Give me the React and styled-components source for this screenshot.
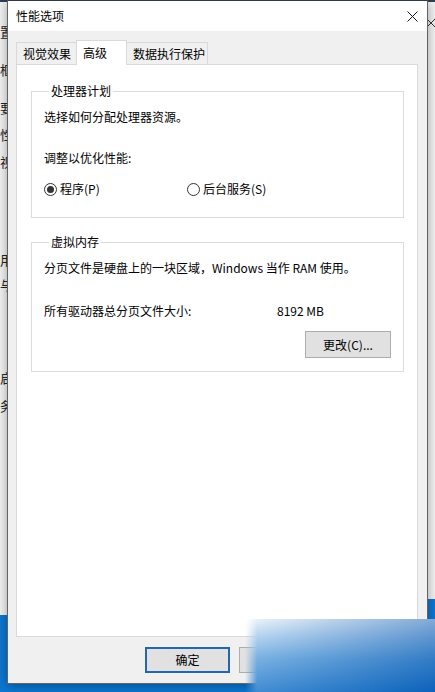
import React from "react";
import styled, { createGlobalStyle } from "styled-components";

const GlobalStyle = createGlobalStyle`
  html, body {
    margin: 0;
    padding: 0;
  }
  body {
    width: 435px;
    height: 692px;
    overflow: hidden;
    background: #0d77d3;
    font-family: "Noto Sans CJK SC", "Microsoft YaHei", sans-serif;
    font-size: 12px;
    color: #000;
  }
`;

const Desktop = styled.div`
  position: relative;
  width: 435px;
  height: 692px;
  overflow: hidden;
  background: #0d77d3;
`;

// windows lying behind the dialog, only their edges show
const BackWindow = styled.div`
  position: absolute;
  top: 0;
  left: ${(p) => p.$left}px;
  width: 300px;
  height: ${(p) => p.$height}px;
  background: #f2f2f2;
  border-top: 2px solid #2c3e50;
  overflow: hidden;
  display: flex;
  flex-direction: column;
  align-items: ${(p) => (p.$side === "left" ? "flex-end" : "flex-start")};
`;

const Fragment = styled.span`
  display: block;
  width: 8px;
  line-height: 16px;
  margin-top: ${(p) => p.$gap}px;
  font-size: 13px;
  white-space: nowrap;
  overflow: visible;
  color: #222;
`;

const BackClose = styled.svg`
  margin-top: 16px;
  margin-left: -2px;
`;

const Dialog = styled.div`
  position: absolute;
  left: 7px;
  top: 0;
  width: 421px;
  height: 684px;
  box-sizing: border-box;
  border: 1px solid #5f6468;
  border-top-color: #2e3a44;
  background: #f0f0f0;
  box-shadow: 0 2px 10px rgba(0, 0, 0, 0.35);
  display: flex;
  flex-direction: column;
`;

const TitleBar = styled.div`
  height: 30px;
  flex-shrink: 0;
  background: #fff;
  display: flex;
  align-items: center;
  justify-content: space-between;
  padding-left: 8px;
`;

const Title = styled.span`
  font-size: 12px;
  line-height: 16px;
`;

const CloseButton = styled.div`
  width: 30px;
  height: 30px;
  display: flex;
  align-items: center;
  justify-content: center;
`;

const Body = styled.div`
  flex: 1;
  display: flex;
  flex-direction: column;
  padding: 9px 9px 10px 8px;
  min-height: 0;
`;

const TabRow = styled.div`
  display: flex;
  align-items: flex-end;
  height: 25px;
  margin-bottom: -1px;
  position: relative;
  z-index: 1;
`;

const Tab = styled.div`
  box-sizing: border-box;
  width: ${(p) => p.$w}px;
  height: ${(p) => (p.$active ? 25 : 22)}px;
  margin-bottom: ${(p) => (p.$active ? 0 : 1)}px;
  margin-left: ${(p) => (p.$first ? 0 : -1)}px;
  padding-left: 6px;
  border: 1px solid #d9d9d9;
  border-bottom: none;
  background: ${(p) => (p.$active ? "#fff" : "#f0f0f0")};
  position: relative;
  z-index: ${(p) => (p.$active ? 2 : 1)};
  display: flex;
  align-items: center;
  font-size: 12px;
  line-height: 16px;
  padding-top: ${(p) => (p.$active ? 0 : 1)}px;
`;

const Panel = styled.div`
  flex: 1;
  background: #fff;
  border: 1px solid #d9d9d9;
  padding: 18px 13px 0 14px;
  display: flex;
  flex-direction: column;
  gap: 16px;
`;

const Group = styled.fieldset`
  margin: 0;
  border: 1px solid #dcdcdc;
  padding: 0 12px ${(p) => p.$pb}px 12px;
  display: flex;
  flex-direction: column;
  min-width: 0;
`;

const Legend = styled.legend`
  padding: 0 2px;
  margin-left: 5px;
  font-size: 12px;
  line-height: 16px;
`;

const Line = styled.div`
  margin-top: ${(p) => p.$mt}px;
  line-height: 16px;
  font-size: 12px;
  white-space: nowrap;
`;

const RadioRow = styled.div`
  margin-top: 15px;
  display: grid;
  grid-template-columns: 143px auto;
  height: 16px;
  align-items: center;
`;

const RadioOption = styled.label`
  display: flex;
  align-items: center;
  gap: 3px;
  line-height: 16px;
  font-size: 12px;
`;

const RadioCircle = styled.span`
  box-sizing: border-box;
  width: 13px;
  height: 13px;
  border-radius: 50%;
  border: 1px solid #333;
  background: #fff;
  display: flex;
  align-items: center;
  justify-content: center;
  &::after {
    content: "";
    width: 7px;
    height: 7px;
    border-radius: 50%;
    background: ${(p) => (p.$checked ? "#333" : "transparent")};
  }
`;

const SizeRow = styled.div`
  margin-top: 27px;
  display: grid;
  grid-template-columns: 233px auto;
  line-height: 16px;
  font-size: 12px;
`;

const Button = styled.button`
  box-sizing: border-box;
  width: ${(p) => p.$w}px;
  height: ${(p) => p.$h}px;
  background: #e1e1e1;
  border: ${(p) => (p.$default ? "2px solid #2466b2" : "1px solid #adadad")};
  border-radius: 0;
  font-family: inherit;
  font-size: 12px;
  color: #000;
  padding: 0;
  line-height: 16px;
`;

const ChangeButton = styled(Button)`
  margin-top: 12px;
  align-self: flex-end;
`;

const ButtonRow = styled.div`
  margin-top: 10px;
  display: flex;
  justify-content: flex-end;
  gap: 9px;
`;

// blurred blue smear lying over the lower right corner of the shot
const Smear = styled.div`
  position: absolute;
  left: 245px;
  top: 619px;
  width: 190px;
  height: 73px;
  background:
    linear-gradient(to right, rgba(255, 255, 255, 0.2), rgba(0, 80, 170, 0.45)),
    linear-gradient(to bottom, #edf4fb 0%, #a6cbed 25%, #5ba0dc 55%, #1572c8 100%);
  -webkit-mask-image: linear-gradient(to right, transparent 0, #000 12px);
  mask-image: linear-gradient(to right, transparent 0, #000 12px);
`;

const leftFragments = [
  { ch: "置", gap: 22 },
  { ch: "框", gap: 22 },
  { ch: "要", gap: 22 },
  { ch: "性", gap: 11 },
  { ch: "视", gap: 11 },
  { ch: "用", gap: 82 },
  { ch: "与", gap: 9 },
  { ch: "启", gap: 77 },
  { ch: "务", gap: 12 },
];

export default function App() {
  return (
    <>
      <GlobalStyle />
      <Desktop>
        <BackWindow $left={-292} $height={613} $side="left">
          {leftFragments.map((f, i) => (
            <Fragment key={i} $gap={f.gap}>
              {f.ch}
            </Fragment>
          ))}
        </BackWindow>
        <BackWindow $left={428} $height={597} $side="right">
          <BackClose width="10" height="10" viewBox="0 0 10 10">
            <path d="M0 0 L10 10 M10 0 L0 10" stroke="#333" strokeWidth="1" fill="none" />
          </BackClose>
        </BackWindow>

        <Dialog>
          <TitleBar>
            <Title>性能选项</Title>
            <CloseButton>
              <svg width="11" height="11" viewBox="0 0 11 11">
                <path d="M0.5 0.5 L10.5 10.5 M10.5 0.5 L0.5 10.5" stroke="#111" strokeWidth="1" fill="none" />
              </svg>
            </CloseButton>
          </TitleBar>

          <Body>
            <TabRow>
              <Tab $w={61} $first>视觉效果</Tab>
              <Tab $w={51} $active>高级</Tab>
              <Tab $w={82}>数据执行保护</Tab>
            </TabRow>

            <Panel>
              <Group $pb={20}>
                <Legend>处理器计划</Legend>
                <Line $mt={10}>选择如何分配处理器资源。</Line>
                <Line $mt={25}>调整以优化性能:</Line>
                <RadioRow>
                  <RadioOption>
                    <RadioCircle $checked />
                    程序(P)
                  </RadioOption>
                  <RadioOption>
                    <RadioCircle />
                    后台服务(S)
                  </RadioOption>
                </RadioRow>
              </Group>

              <Group $pb={13}>
                <Legend>虚拟内存</Legend>
                <Line $mt={10}>分页文件是硬盘上的一块区域，Windows 当作 RAM 使用。</Line>
                <SizeRow>
                  <span>所有驱动器总分页文件大小:</span>
                  <span>8192 MB</span>
                </SizeRow>
                <ChangeButton $w={86} $h={27}>更改(C)...</ChangeButton>
              </Group>
            </Panel>

            <ButtonRow>
              <Button $w={85} $h={26} $default>确定</Button>
              <Button $w={85} $h={26}>取消</Button>
              <Button $w={85} $h={26}>应用(A)</Button>
            </ButtonRow>
          </Body>
        </Dialog>

        <Smear />
      </Desktop>
    </>
  );
}
